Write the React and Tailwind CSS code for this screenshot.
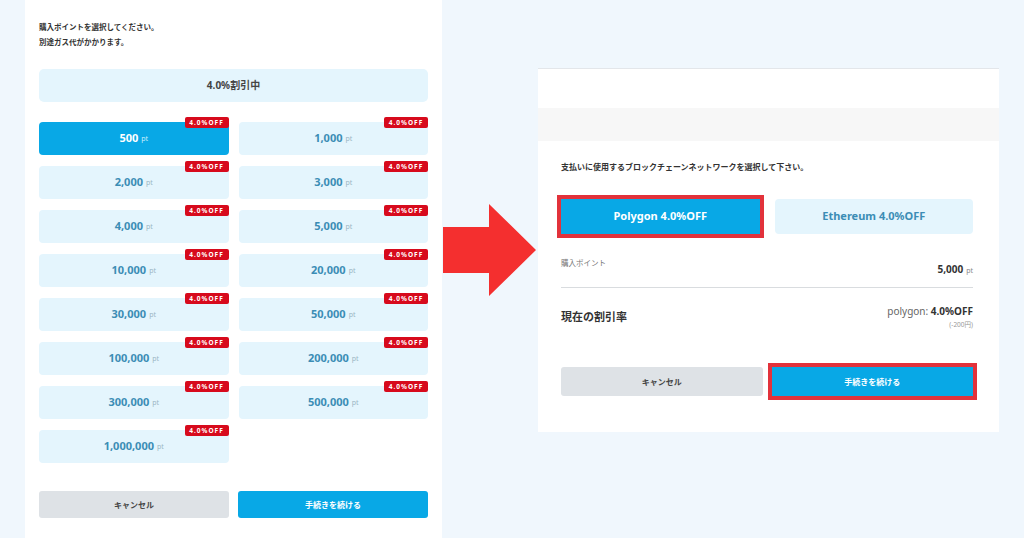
const FONT = { fontFamily: '"Noto Sans", "Noto Sans CJK JP", sans-serif' };

const POINTS = ["500", "1,000", "2,000", "3,000", "4,000", "5,000", "10,000", "20,000", "30,000", "50,000", "100,000", "200,000", "300,000", "500,000", "1,000,000"];

function PointButton({ value, selected }) {
  return (
    <div className="relative">
      <div
        className={`flex h-[33px] items-center justify-center rounded-[4px] ${
          selected ? "bg-[#08a8e6]" : "bg-[#e4f5fd]"
        }`}
      >
        <span className={`text-[11px] font-bold ${selected ? "text-white" : "text-[#3b8db5]"}`}>{value}</span>
        <span className={`ml-[3px] mt-[2px] text-[7px] ${selected ? "text-[#cdeefb]" : "text-[#9bb6c4]"}`}>pt</span>
      </div>
      <span className="absolute -top-[5px] right-0 flex h-[11px] w-[44px] items-center justify-center rounded-[2px] bg-[#d70a1c] text-[6.5px] font-bold tracking-[1px] text-white">
        4.0%OFF
      </span>
    </div>
  );
}

export default function App() {
  return (
    <div className="flex h-[538px] w-[1024px] overflow-hidden bg-[#f0f7fd] text-[#333]" style={FONT}>
      {/* Left: point selection */}
      <div className="ml-[25px] h-full w-[417px] shrink-0 bg-white px-[14px] pt-[20px]">
        <p className="text-[7.5px] font-bold leading-[15px] text-[#333]">購入ポイントを選択してください。</p>
        <p className="text-[7.5px] font-bold leading-[15px] text-[#333]">別途ガス代がかかります。</p>

        <div className="mt-[19px] flex h-[33px] items-center justify-center rounded-[5px] bg-[#e4f5fd] text-[10px] font-bold text-[#444]">
          4.0%割引中
        </div>

        <div className="mt-[20px] grid grid-cols-2 gap-x-[10px] gap-y-[11px]">
          {POINTS.map((p, i) => (
            <PointButton key={p} value={p} selected={i === 0} />
          ))}
        </div>

        <div className="mt-[28px] grid grid-cols-2 gap-x-[9px]">
          <button className="flex h-[27px] items-center justify-center rounded-[3px] bg-[#dee2e6] text-[8px] font-bold text-[#444]">
            キャンセル
          </button>
          <button className="flex h-[27px] items-center justify-center rounded-[3px] bg-[#08a8e6] text-[8px] font-bold text-white">
            手続きを続ける
          </button>
        </div>
      </div>

      {/* Arrow */}
      <div className="w-[96px] shrink-0 pt-[204px]">
        <svg width="96" height="92" viewBox="0 0 96 92">
          <polygon points="1,23 47,23 47,0 94,46 47,92 47,69 1,69" fill="#f42f2f" />
        </svg>
      </div>

      {/* Right: network selection */}
      <div className="mt-[68px] h-[364px] w-[461px] shrink-0 border-t border-[#e3e6ea] bg-white">
        <div className="h-[39px]" />
        <div className="h-[33px] bg-[#f7f7f7]" />
        <div className="px-[23px] pr-[26px] pt-[20px]">
          <p className="text-[8px] font-bold leading-[12px] text-[#333]">
            支払いに使用するブロックチェーンネットワークを選択して下さい。
          </p>

          <div className="mt-[26px] grid grid-cols-2 gap-x-[15px]">
            <button className="flex h-[35px] items-center justify-center bg-[#08a8e6] text-[11px] font-bold text-white ring-4 ring-[#e2323b]">
              Polygon 4.0%OFF
            </button>
            <button className="flex h-[35px] items-center justify-center rounded-[4px] bg-[#e4f5fd] text-[11px] font-bold text-[#3b8db5]">
              Ethereum 4.0%OFF
            </button>
          </div>

          <div className="mt-[23px] flex items-start justify-between">
            <span className="text-[7.5px] leading-[12px] text-[#777]">購入ポイント</span>
            <span className="mt-[5px] text-[10px] font-bold leading-[14px] text-[#333]">
              5,000<span className="ml-[3px] text-[7px] font-normal text-[#888]">pt</span>
            </span>
          </div>

          <div className="mt-[9px] border-t border-[#d9dcdf]" />

          <div className="flex items-center justify-between pt-[16px]">
            <span className="text-[11px] font-bold text-[#333]">現在の割引率</span>
            <div className="flex flex-col items-end">
              <span className="text-[10px] leading-[14px] text-[#666]">
                polygon: <span className="font-bold text-[#333]">4.0%OFF</span>
              </span>
              <span className="mt-[2px] text-[6.5px] leading-[10px] text-[#999]">(-200円)</span>
            </div>
          </div>

          <div className="mt-[37px] grid grid-cols-2 gap-x-[9px]">
            <button className="flex h-[29px] items-center justify-center rounded-[3px] bg-[#dee2e6] text-[8px] font-bold text-[#444]">
              キャンセル
            </button>
            <button className="flex h-[29px] items-center justify-center bg-[#08a8e6] text-[8px] font-bold text-white ring-4 ring-[#e2323b]">
              手続きを続ける
            </button>
          </div>
        </div>
      </div>
    </div>
  );
}
